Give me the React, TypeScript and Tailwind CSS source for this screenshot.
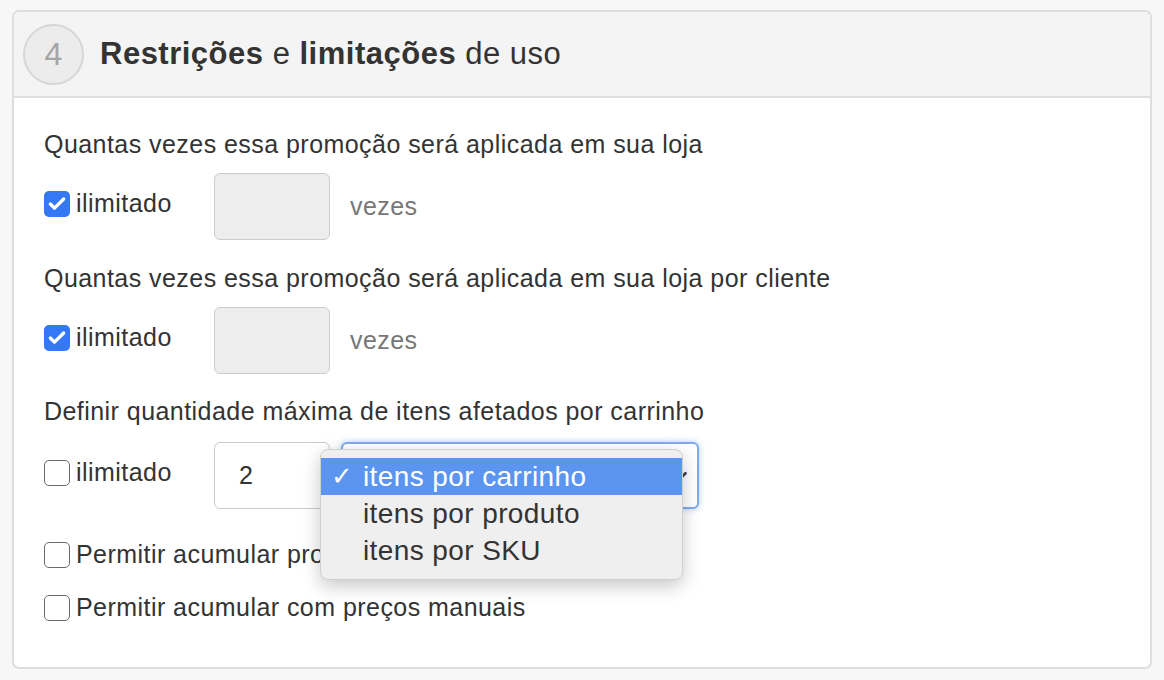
import { Check, ChevronDown } from "lucide-react"

const font = { fontFamily: '"Liberation Sans", Arial, sans-serif' }

function Box({ checked }: { checked: boolean }) {
    if (checked) {
        return (
            <span className="w-[26px] h-[26px] rounded-[5px] bg-[#3478f6] flex items-center justify-center shrink-0">
                <Check className="w-[20px] h-[20px] text-white" strokeWidth={4} />
            </span>
        )
    }
    return <span className="w-[26px] h-[26px] rounded-[5px] bg-white border-[1.5px] border-[#6b6b6b] shrink-0" />
}

function LimitRow({ checked, value, children }: { checked: boolean; value?: string; children?: React.ReactNode }) {
    return (
        <div className="flex items-center h-[67px]">
            <div className="w-[170px] flex items-center gap-[6px] pb-[6px]">
                <Box checked={checked} />
                <span className="text-[25px] tracking-[0.45px] text-[#333]">ilimitado</span>
            </div>
            <div
                className={`w-[116px] h-[67px] rounded-[6px] border-[1.5px] border-[#ccc] flex items-center pl-[24px] text-[25px] text-[#333] ${checked ? "bg-[#ededed]" : "bg-white"}`}
            >
                {value}
            </div>
            {children}
        </div>
    )
}

export default function App() {
    return (
        <div className="min-h-[680px] bg-[#f7f7f7] pt-[10px] pl-[12px] pr-[12px]" style={font}>
            <div className="border-2 border-[#dedede] rounded-[7px] bg-white overflow-visible">
                {/* Header */}
                <div className="h-[86px] bg-[#f4f4f4] border-b-2 border-[#e0e0e0] rounded-t-[6px] flex items-center pl-[9px]">
                    <div className="w-[61px] h-[61px] rounded-full border-2 border-[#d6d6d6] bg-[#ececec] flex items-center justify-center text-[32px] text-[#a5a5a5]">
                        4
                    </div>
                    <h2 className="ml-[16px] text-[31px] tracking-[0.5px] text-[#333]">
                        <span className="font-bold">Restrições</span> e <span className="font-bold">limitações</span> de uso
                    </h2>
                </div>

                {/* Body */}
                <div className="px-[30px] pt-[31px] pb-[44px] text-[#333] text-[25px] tracking-[0.45px]">
                    <p className="leading-[30px]">Quantas vezes essa promoção será aplicada em sua loja</p>
                    <div className="mt-[14px]">
                        <LimitRow checked>
                            <span className="ml-[20px] text-[#777]">vezes</span>
                        </LimitRow>
                    </div>

                    <p className="mt-[23px] leading-[30px]">Quantas vezes essa promoção será aplicada em sua loja por cliente</p>
                    <div className="mt-[14px]">
                        <LimitRow checked>
                            <span className="ml-[20px] text-[#777]">vezes</span>
                        </LimitRow>
                    </div>

                    <p className="mt-[22px] leading-[30px]">Definir quantidade máxima de itens afetados por carrinho</p>
                    <div className="mt-[16px]">
                        <LimitRow checked={false} value="2">
                            <div className="relative ml-[11px]">
                                <div className="w-[358px] h-[67px] rounded-[6px] border-2 border-[#7fabec] bg-white shadow-[0_0_6px_rgba(80,140,230,0.45)] flex items-center justify-end pr-[6px]">
                                    <ChevronDown className="w-[22px] h-[22px] text-[#444]" strokeWidth={3} />
                                </div>
                                {/* Open dropdown */}
                                <div className="absolute left-[-21px] top-[7px] w-[363px] pt-[8px] pb-[10px] rounded-[8px] bg-[#efefef] border border-[#cfcfcf] shadow-[0_6px_18px_rgba(0,0,0,0.22)] text-[28px] tracking-[0.4px]">
                                    <div className="h-[37px] bg-[#5b95f0] text-white flex items-center">
                                        <span className="w-[42px] pl-[10px] text-[26px]">✓</span>
                                        <span>itens por carrinho</span>
                                    </div>
                                    <div className="h-[37px] text-[#333] flex items-center pl-[42px]">itens por produto</div>
                                    <div className="h-[37px] text-[#333] flex items-center pl-[42px]">itens por SKU</div>
                                </div>
                            </div>
                        </LimitRow>
                    </div>

                    <div className="mt-[31px] flex items-center gap-[6px] h-[30px]">
                        <Box checked={false} />
                        <span>Permitir acumular promoções</span>
                    </div>
                    <div className="mt-[23px] flex items-center gap-[6px] h-[30px]">
                        <Box checked={false} />
                        <span>Permitir acumular com preços manuais</span>
                    </div>
                </div>
            </div>
        </div>
    )
}
